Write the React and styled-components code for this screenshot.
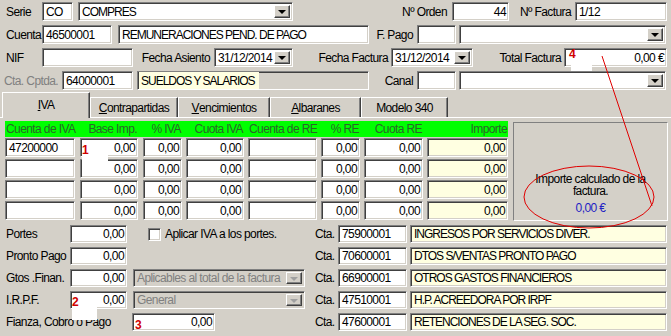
import React from 'react';
import styled, { createGlobalStyle, css } from 'styled-components';

const Global = createGlobalStyle`
  html, body { margin: 0; padding: 0; background: #d4d0c8; }
  body {
    font-family: "Liberation Sans", Arial, sans-serif;
    font-size: 12px;
    letter-spacing: -0.6px;
    color: #000;
  }
`;

const sunken = css`
  box-sizing: border-box;
  border: 1px solid;
  border-color: #808080 #ffffff #ffffff #808080;
  box-shadow: inset 1px 1px 0 #404040, inset -1px -1px 0 #d4d0c8;
`;

const raised = css`
  box-sizing: border-box;
  border: 1px solid;
  border-color: #ffffff #404040 #404040 #ffffff;
  box-shadow: inset -1px -1px 0 #808080, inset 1px 1px 0 #d4d0c8;
`;

const Page = styled.div`
  position: relative;
  width: 671px;
  height: 336px;
  overflow: hidden;
  background: #d4d0c8;
`;

const Head = styled.div`
  display: flex;
  flex-direction: column;
  gap: 4px;
  padding: 2px 0 0 6px;
`;

const Row = styled.div`
  display: flex;
  align-items: center;
  height: ${p => p.$h || 19}px;
`;

const Label = styled.span`
  flex: none;
  box-sizing: border-box;
  width: ${p => p.$w}px;
  margin-left: ${p => p.$ml || 0}px;
  padding-right: ${p => p.$pr || 0}px;
  text-align: ${p => (p.$right ? 'right' : 'left')};
  color: ${p => (p.$disabled ? '#808080' : '#000')};
  white-space: nowrap;
`;

const Field = styled.div`
  ${sunken};
  flex: none;
  width: ${p => p.$w}px;
  height: ${p => p.$h || 19}px;
  margin-left: ${p => p.$ml || 0}px;
  background: ${p => p.$bg || '#ffffff'};
  color: ${p => (p.$muted ? '#808080' : '#000')};
  letter-spacing: ${p => (p.$caps ? '-1px' : 'inherit')};
  display: flex;
  align-items: center;
  justify-content: ${p => (p.$right ? 'flex-end' : 'flex-start')};
  padding: 0 2px 0 3px;
  white-space: nowrap;
  overflow: hidden;
`;

const SelectBox = styled(Field)`
  justify-content: space-between;
  padding: 2px 2px 2px 3px;
`;

const DropBtn = styled.span`
  ${raised};
  flex: none;
  width: 16px;
  height: 100%;
  background: #d4d0c8;
  display: flex;
  align-items: center;
  justify-content: center;
  &::after {
    content: '';
    width: 0;
    height: 0;
    border-left: 4px solid transparent;
    border-right: 4px solid transparent;
    border-top: 4px solid ${p => (p.$disabled ? '#a0a0a0' : '#000')};
    margin-top: 1px;
  }
`;

const HiText = styled.span`
  display: flex;
  align-items: center;
  height: 100%;
  background: #ffffe1;
  padding: 0 4px 0 2px;
  margin-left: -2px;
`;

const TabBar = styled.div`
  display: flex;
  align-items: flex-start;
  height: 25px;
  margin-top: 2px;
  padding-left: 2px;
`;

const Tab = styled.div`
  box-sizing: border-box;
  position: relative;
  z-index: ${p => (p.$active ? 2 : 1)};
  flex: none;
  width: ${p => p.$w}px;
  height: ${p => (p.$active ? 26 : 20)}px;
  margin-top: ${p => (p.$active ? 0 : 5)}px;
  background: #d4d0c8;
  border-top: 1px solid #ffffff;
  border-left: 1px solid #ffffff;
  border-right: 1px solid #404040;
  box-shadow: inset -1px 0 0 #808080;
  display: flex;
  align-items: center;
  justify-content: center;
  padding-bottom: ${p => (p.$active ? 2 : 0)}px;
  white-space: nowrap;
  u { text-decoration-thickness: 1px; text-underline-offset: 1px; }
`;

const Panel = styled.div`
  border-top: 1px solid #ffffff;
  display: flex;
  padding: 3px 0 0 5px;
`;

const Table = styled.div`
  flex: none;
  width: 503px;
  display: flex;
  flex-direction: column;
  gap: 2px;
`;

const GreenHead = styled.div`
  display: flex;
  height: 16px;
  background: #00ff00;
  color: #2a662a;
  align-items: center;
  margin-bottom: -1px;
`;

const HeadCell = styled.span`
  flex: none;
  box-sizing: border-box;
  width: ${p => p.$w}px;
  margin-left: ${p => p.$ml}px;
  text-align: ${p => (p.$left ? 'left' : 'right')};
  padding: ${p => (p.$left ? '0 0 0 1px' : '0 1px 0 0')};
  white-space: nowrap;
`;

const DataRow = styled.div`
  display: flex;
  height: 19px;
`;

const TotalBox = styled.div`
  flex: none;
  box-sizing: border-box;
  width: 155px;
  height: 99px;
  margin: 1px 0 0 5px;
  border: 1px solid;
  border-color: #808080 #ffffff #ffffff #808080;
  display: flex;
  flex-direction: column;
  justify-content: flex-end;
  align-items: center;
  text-align: center;
  line-height: 12px;
  padding: 0 10px 6px;
`;

const TotalValue = styled.div`
  color: #2222c4;
  margin-top: 5px;
`;

const Bottom = styled.div`
  display: flex;
  flex-direction: column;
  gap: 4px;
  padding: 4px 0 0 6px;
`;

const LeftPart = styled.div`
  flex: none;
  width: 309px;
  display: flex;
  align-items: center;
  height: 100%;
`;

const RightPart = styled.div`
  display: flex;
  align-items: center;
  height: 100%;
`;

const Check = styled.span`
  ${sunken};
  flex: none;
  width: 13px;
  height: 13px;
  background: #fff;
  margin-left: ${p => p.$ml}px;
`;

const CheckText = styled.span`
  margin-left: 4px;
  white-space: nowrap;
`;

const Patch = styled.div`
  position: absolute;
  z-index: 5;
  background: #ffffff;
  left: ${p => p.$x}px;
  top: ${p => p.$y}px;
  width: ${p => p.$w}px;
  height: ${p => p.$h}px;
`;

const Marker = styled.span`
  position: absolute;
  z-index: 6;
  left: ${p => p.$x}px;
  top: ${p => p.$y}px;
  color: #d00000;
  font-weight: bold;
  font-size: 12px;
  line-height: 12px;
  letter-spacing: 0;
`;

const Overlay = styled.svg`
  position: absolute;
  z-index: 7;
  left: 0;
  top: 0;
  pointer-events: none;
`;

const Select = ({ w, ml, h, children, disabled, caps }) => (
  <SelectBox $w={w} $ml={ml} $h={h} $caps={caps} $bg={disabled ? '#d4d0c8' : '#fff'} $muted={disabled}>
    <span>{children}</span>
    <DropBtn $disabled={disabled} />
  </SelectBox>
);

const cols = [
  { w: 70, ml: 0, h: 'Cuenta de IVA', left: true },
  { w: 58, ml: 5, h: 'Base Imp.' },
  { w: 39, ml: 5, h: '% IVA' },
  { w: 58, ml: 4, h: 'Cuota IVA' },
  { w: 69, ml: 4, h: 'Cuenta de RE', left: true },
  { w: 39, ml: 4, h: '% RE' },
  { w: 59, ml: 4, h: 'Cuota RE' },
  { w: 81, ml: 4, h: 'Importe', yellow: true },
];

const rows = [
  ['47200000', '0,00', '0,00', '0,00', '', '0,00', '0,00', '0,00'],
  ['', '0,00', '0,00', '0,00', '', '0,00', '0,00', '0,00'],
  ['', '0,00', '0,00', '0,00', '', '0,00', '0,00', '0,00'],
  ['', '0,00', '0,00', '0,00', '', '0,00', '0,00', '0,00'],
];

const ctas = [
  ['75900001', 'INGRESOS POR SERVICIOS DIVER.'],
  ['70600001', 'DTOS S/VENTAS PRONTO PAGO'],
  ['66900001', 'OTROS GASTOS FINANCIEROS'],
  ['47510001', 'H.P. ACREEDORA POR IRPF'],
  ['47600001', 'RETENCIONES DE LA SEG. SOC.'],
];

const tabs = [
  { w: 88, label: <><u>I</u>VA</>, active: true },
  { w: 88, label: <><u>C</u>ontrapartidas</> },
  { w: 92, label: <><u>V</u>encimientos</> },
  { w: 91, label: <><u>A</u>lbaranes</> },
  { w: 87, label: <>Modelo 340</> },
];

const CtaRight = ({ i }) => (
  <RightPart>
    <Label $w={23}>Cta.</Label>
    <Field $w={69} $h={18}>{ctas[i][0]}</Field>
    <Field $w={257} $h={18} $ml={3} $bg="#ffffe1" $caps>{ctas[i][1]}</Field>
  </RightPart>
);

export default function App() {
  return (
    <Page>
      <Global />
      <Head>
        <Row>
          <Label $w={36}>Serie</Label>
          <Field $w={31}>CO</Field>
          <Select w={215} ml={5} caps>COMPRES</Select>
          <Label $w={159} $right $pr={5}>Nº Orden</Label>
          <Field $w={57} $right>44</Field>
          <Label $w={66} $right $pr={4}>Nº Factura</Label>
          <Field $w={92}>1/12</Field>
        </Row>
        <Row>
          <Label $w={36}>Cuenta</Label>
          <Field $w={70}>46500001</Field>
          <Field $w={251} $ml={6} $caps>REMUNERACIONES PEND. DE PAGO</Field>
          <Label $w={48} $right $pr={4}>F. Pago</Label>
          <Field $w={39} />
          <Select w={207} ml={3} />
        </Row>
        <Row>
          <Label $w={36}>NIF</Label>
          <Field $w={91} />
          <Label $w={81} $right $pr={4}>Fecha Asiento</Label>
          <Select w={79}>31/12/2014</Select>
          <Label $w={98} $right $pr={3}>Fecha Factura</Label>
          <Select w={82}>31/12/2014</Select>
          <Label $w={91} $right $pr={3}>Total Factura</Label>
          <Field $w={103} $right>0,00 €</Field>
        </Row>
        <Row>
          <Label $w={58} $ml={-2} $disabled>Cta. Cptda.</Label>
          <Field $w={71}>64000001</Field>
          <Field $w={232} $ml={4} $bg="#d4d0c8" $caps>
            <HiText>SUELDOS Y SALARIOS</HiText>
          </Field>
          <Label $w={48} $right $pr={4}>Canal</Label>
          <Field $w={39} />
          <Select w={207} ml={3} />
        </Row>
      </Head>

      <TabBar>
        {tabs.map((t, i) => (
          <Tab key={i} $w={t.w} $active={t.active}>{t.label}</Tab>
        ))}
      </TabBar>

      <Panel>
        <Table>
          <GreenHead>
            {cols.map((c, i) => (
              <HeadCell key={i} $w={c.w} $ml={c.ml} $left={c.left}>{c.h}</HeadCell>
            ))}
          </GreenHead>
          {rows.map((r, ri) => (
            <DataRow key={ri}>
              {cols.map((c, ci) => (
                <Field
                  key={ci}
                  $w={c.w}
                  $ml={c.ml}
                  $right={!c.left}
                  $bg={c.yellow ? '#ffffe1' : '#fff'}
                >
                  {r[ci]}
                </Field>
              ))}
            </DataRow>
          ))}
        </Table>
        <TotalBox>
          <div>Importe calculado de la factura.</div>
          <TotalValue>0,00 €</TotalValue>
        </TotalBox>
      </Panel>

      <Bottom>
        <Row $h={18}>
          <LeftPart>
            <Label $w={64}>Portes</Label>
            <Field $w={57} $h={18} $right>0,00</Field>
            <Check $ml={21} />
            <CheckText>Aplicar IVA a los portes.</CheckText>
          </LeftPart>
          <CtaRight i={0} />
        </Row>
        <Row $h={18}>
          <LeftPart>
            <Label $w={64}>Pronto Pago</Label>
            <Field $w={57} $h={18} $right>0,00</Field>
          </LeftPart>
          <CtaRight i={1} />
        </Row>
        <Row $h={18}>
          <LeftPart>
            <Label $w={64}>Gtos .Finan.</Label>
            <Field $w={57} $h={18} $right>0,00</Field>
            <Select w={172} ml={6} h={18} disabled>Aplicables al total de la factura</Select>
          </LeftPart>
          <CtaRight i={2} />
        </Row>
        <Row $h={18}>
          <LeftPart>
            <Label $w={64}>I.R.P.F.</Label>
            <Field $w={57} $h={18} $right>0,00</Field>
            <Select w={172} ml={6} h={18} disabled>General</Select>
          </LeftPart>
          <CtaRight i={3} />
        </Row>
        <Row $h={18}>
          <LeftPart>
            <Label $w={126}>Fianza, Cobro o Pago</Label>
            <Field $w={83} $h={18} $right>0,00</Field>
          </LeftPart>
          <CtaRight i={4} />
        </Row>
      </Bottom>

      <Patch $x={571} $y={50} $w={21} $h={21} />
      <Patch $x={82} $y={148} $w={26} $h={13} />
      <Patch $x={72} $y={302} $w={25} $h={18} />
      <Marker $x={569} $y={48}>4</Marker>
      <Marker $x={82} $y={144}>1</Marker>
      <Marker $x={72} $y={296}>2</Marker>
      <Marker $x={135} $y={319}>3</Marker>

      <Overlay width="671" height="336" viewBox="0 0 671 336">
        <line x1="602" y1="56" x2="652" y2="206" stroke="#e00000" strokeWidth="1" />
        <ellipse cx="589" cy="197" rx="65" ry="31" fill="none" stroke="#e00000" strokeWidth="1" />
      </Overlay>
    </Page>
  );
}
